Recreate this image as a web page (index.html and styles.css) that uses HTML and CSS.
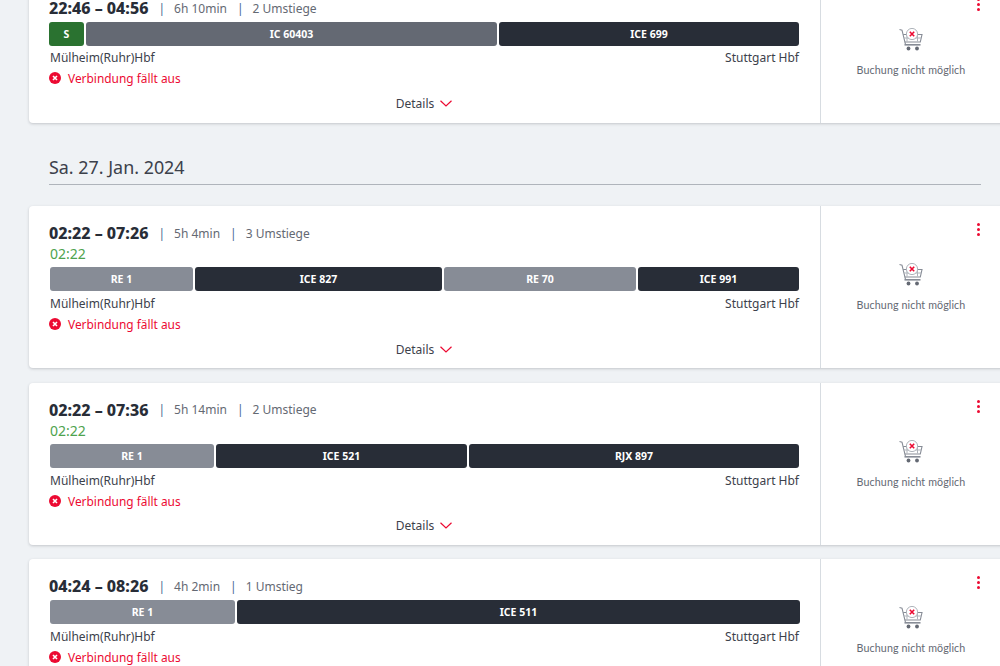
FILE: index.html
```html
<!DOCTYPE html>
<html lang="de">
<head>
<meta charset="utf-8">
<title>Verbindungen</title>
<link rel="stylesheet" href="styles.css">
</head>
<body>
<svg class="defs" width="0" height="0" aria-hidden="true">
  <symbol id="cart" viewBox="0 0 24 24">
    <path d="M0.5 1.5 L3 2.2 L6.5 16.5 H21" fill="none" stroke="#878c96" stroke-width="1.1"/>
    <path d="M4.2 6.5 H23 L21.3 14 H5.8" fill="none" stroke="#878c96" stroke-width="1.1"/>
    <path d="M8 7 V13.5 M18.5 7 V13.5 M5 10 H22" fill="none" stroke="#afb4bb" stroke-width="1"/>
    <rect x="5.5" y="16" width="16" height="1.6" fill="#878c96"/>
    <circle cx="9.5" cy="20.5" r="1.9" fill="#646973"/>
    <circle cx="18" cy="20.5" r="1.9" fill="#646973"/>
    <circle cx="13" cy="6" r="5.6" fill="#fff" stroke="#afb4bb" stroke-width="1"/>
    <path d="M10.8 3.8 L15.2 8.2 M15.2 3.8 L10.8 8.2" stroke="#ec0a32" stroke-width="1.6"/>
  </symbol>
  <symbol id="fail" viewBox="0 0 12 12">
    <circle cx="6" cy="6" r="6" fill="#ec0a32"/>
    <path d="M4 4 L8 8 M8 4 L4 8" stroke="#fff" stroke-width="1.6"/>
  </symbol>
  <symbol id="chev" viewBox="0 0 12 7">
    <path d="M0.5 0.7 L6 6 L11.5 0.7" fill="none" stroke="#ec0a32" stroke-width="1.2"/>
  </symbol>
</svg>
<main class="page">
  <article class="card card-short card-first">
    <div class="info">
      <div class="head"><b class="time">22:46 – 04:56</b><i class="sep">|</i><span>6h 10min</span><i class="sep">|</i><span>2 Umstiege</span></div>
      <div class="bars">
        <div class="bar bar-s" style="width:35px">S</div>
        <div class="bar bar-ic" style="width:411px">IC 60403</div>
        <div class="bar bar-ice" style="width:300px">ICE 699</div>
      </div>
      <div class="stations"><span>Mülheim(Ruhr)Hbf</span><span>Stuttgart Hbf</span></div>
      <div class="fail"><svg class="fail-icon"><use href="#fail"/></svg>Verbindung fällt aus</div>
      <div class="details">Details<svg class="chev"><use href="#chev"/></svg></div>
    </div>
    <aside class="book">
      <span class="dots"><i></i><i></i><i></i></span>
      <svg class="cart"><use href="#cart"/></svg>
      <span class="book-label">Buchung nicht möglich</span>
    </aside>
  </article>

  <h2 class="date">Sa. 27. Jan. 2024</h2>

  <article class="card">
    <div class="info">
      <div class="head"><b class="time">02:22 – 07:26</b><i class="sep">|</i><span>5h 4min</span><i class="sep">|</i><span>3 Umstiege</span></div>
      <div class="delay">02:22</div>
      <div class="bars">
        <div class="bar bar-re" style="width:143px">RE 1</div>
        <div class="bar bar-ice" style="width:247px">ICE 827</div>
        <div class="bar bar-re" style="width:192px">RE 70</div>
        <div class="bar bar-ice" style="width:161px">ICE 991</div>
      </div>
      <div class="stations"><span>Mülheim(Ruhr)Hbf</span><span>Stuttgart Hbf</span></div>
      <div class="fail"><svg class="fail-icon"><use href="#fail"/></svg>Verbindung fällt aus</div>
      <div class="details">Details<svg class="chev"><use href="#chev"/></svg></div>
    </div>
    <aside class="book">
      <span class="dots"><i></i><i></i><i></i></span>
      <svg class="cart"><use href="#cart"/></svg>
      <span class="book-label">Buchung nicht möglich</span>
    </aside>
  </article>

  <article class="card">
    <div class="info">
      <div class="head"><b class="time">02:22 – 07:36</b><i class="sep">|</i><span>5h 14min</span><i class="sep">|</i><span>2 Umstiege</span></div>
      <div class="delay">02:22</div>
      <div class="bars">
        <div class="bar bar-re" style="width:164px">RE 1</div>
        <div class="bar bar-ice" style="width:251px">ICE 521</div>
        <div class="bar bar-ice" style="width:330px">RJX 897</div>
      </div>
      <div class="stations"><span>Mülheim(Ruhr)Hbf</span><span>Stuttgart Hbf</span></div>
      <div class="fail"><svg class="fail-icon"><use href="#fail"/></svg>Verbindung fällt aus</div>
      <div class="details">Details<svg class="chev"><use href="#chev"/></svg></div>
    </div>
    <aside class="book">
      <span class="dots"><i></i><i></i><i></i></span>
      <svg class="cart"><use href="#cart"/></svg>
      <span class="book-label">Buchung nicht möglich</span>
    </aside>
  </article>

  <article class="card card-short">
    <div class="info">
      <div class="head"><b class="time">04:24 – 08:26</b><i class="sep">|</i><span>4h 2min</span><i class="sep">|</i><span>1 Umstieg</span></div>
      <div class="bars">
        <div class="bar bar-re" style="width:185px">RE 1</div>
        <div class="bar bar-ice" style="width:563px">ICE 511</div>
      </div>
      <div class="stations"><span>Mülheim(Ruhr)Hbf</span><span>Stuttgart Hbf</span></div>
      <div class="fail"><svg class="fail-icon"><use href="#fail"/></svg>Verbindung fällt aus</div>
      <div class="details">Details<svg class="chev"><use href="#chev"/></svg></div>
    </div>
    <aside class="book">
      <span class="dots"><i></i><i></i><i></i></span>
      <svg class="cart"><use href="#cart"/></svg>
      <span class="book-label">Buchung nicht möglich</span>
    </aside>
  </article>
</main>
</body>
</html>
```
FILE: styles.css
```css
* { box-sizing: border-box; }
html, body { margin: 0; height: 666px; overflow: hidden; }
body {
  background: #eff2f5;
  color: #3c414b;
  font-family: "Noto Sans", "Liberation Sans", sans-serif;
  font-size: 12px;
}
.defs { position: absolute; }
.page {
  display: flex;
  flex-direction: column;
  margin-top: -19px;
  padding-left: 29px;
  width: 1000px;
}
.card {
  display: flex;
  flex: none;
  height: 162px;
  width: 985px;
  margin-bottom: 14.5px;
  background: #fff;
  border-radius: 4px 0 0 4px;
  box-shadow: 0 1px 3px rgba(40, 45, 55, 0.22);
}
.card-short { height: 142px; }
.card-first { margin-bottom: 0; }
.info {
  display: flex;
  flex-direction: column;
  width: 792px;
  flex: none;
  padding: 17px 21px 0 20px;
  border-right: 1px solid #d7dce1;
}
.head {
  display: flex;
  align-items: center;
  height: 20px;
  color: #646973;
  font-size: 12px;
}
.time {
  color: #282d37;
  font-size: 16px;
  font-weight: 800;
}
.sep {
  font-style: normal;
  color: #4a6a90;
  margin: 0 9px 0 10px;
}
.delay {
  height: 21px;
  margin-left: 1px;
  line-height: 21px;
  color: #4ea34e;
  font-size: 14px;
}
.bars {
  display: flex;
  gap: 2px;
  height: 24px;
  margin: 4px 0 4px 1px;
}
.delay + .bars { margin-top: 3px; }
.card-first .bars { margin: 4px 0 3px 0; }
.bar {
  display: flex;
  align-items: center;
  justify-content: center;
  flex: none;
  border-radius: 3px;
  color: #fff;
  font-size: 10.5px;
  font-weight: 700;
}
.bar-s { background: #2a7230; }
.bar-ic { background: #646973; }
.bar-ice { background: #282d37; }
.bar-re { background: #878c96; }
.stations {
  display: flex;
  justify-content: space-between;
  height: 17px;
  margin-left: 1px;
  line-height: 17px;
  color: #3c414b;
  font-size: 12px;
}
.fail {
  display: flex;
  align-items: center;
  gap: 7px;
  height: 20px;
  margin-top: 2px;
  color: #ec0a32;
  font-size: 11.9px;
}
.fail-icon { width: 12px; height: 12px; flex: none; }
.details {
  display: flex;
  align-items: center;
  justify-content: center;
  gap: 6px;
  height: 20px;
  margin-top: 5px;
  color: #3c414b;
  font-size: 12px;
}
.chev { width: 12px; height: 7px; }
.book {
  position: relative;
  display: flex;
  flex-direction: column;
  align-items: center;
  justify-content: center;
  gap: 11px;
  width: 180px;
  flex: none;
}
.cart { width: 24px; height: 24px; }
.book-label {
  color: #646973;
  font-family: "Lato", "Noto Sans", sans-serif;
  font-size: 10.7px;
  letter-spacing: 0.1px;
}
.dots {
  position: absolute;
  top: 17px;
  right: 21px;
  display: flex;
  flex-direction: column;
  gap: 2px;
}
.dots i {
  display: block;
  width: 3px;
  height: 3px;
  border-radius: 50%;
  background: #ec0a32;
}
.date {
  margin: 33px 19px 21px 20px;
  padding-bottom: 5px;
  border-bottom: 1px solid #afb4bb;
  color: #3c414b;
  font-size: 17.9px;
  line-height: 23px;
  font-weight: 400;
}
```
